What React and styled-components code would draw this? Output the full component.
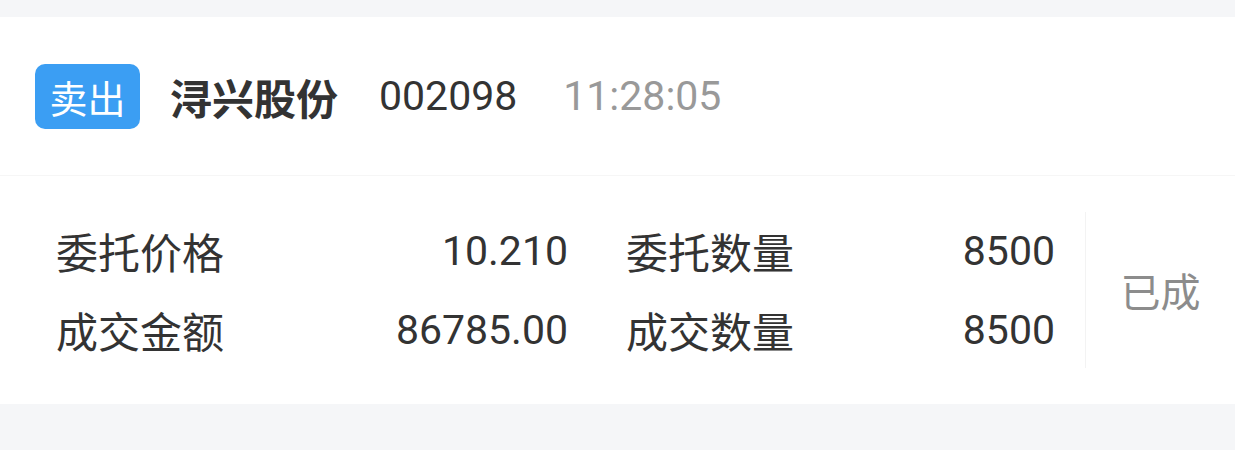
import React from "react";
import styled, { createGlobalStyle } from "styled-components";

const GlobalStyle = createGlobalStyle`
  html, body {
    margin: 0;
    padding: 0;
    background: #f5f6f8;
  }
  body {
    font-family: Roboto, "Noto Sans CJK SC", sans-serif;
    color: #333;
  }
`;

const Page = styled.div`
  width: 1235px;
  height: 450px;
  padding-top: 17px;
  box-sizing: border-box;
  background: #f5f6f8;
`;

const Card = styled.div`
  background: #fff;
`;

const Header = styled.div`
  height: 158px;
  display: flex;
  align-items: center;
  padding-left: 35px;
  border-bottom: 1px solid #f6f6f6;
`;

const Badge = styled.div`
  width: 105px;
  height: 65px;
  border-radius: 10px;
  background: #3b9ef3;
  color: #fff;
  font-family: "Noto Sans CJK SC", sans-serif;
  font-size: 38px;
  display: flex;
  align-items: center;
  justify-content: center;
  margin-right: 30px;
`;

const Name = styled.span`
  font-family: "Noto Sans CJK SC", sans-serif;
  font-weight: 700;
  font-size: 42px;
  color: #333;
  margin-right: 41px;
`;

const Code = styled.span`
  font-family: Roboto, sans-serif;
  font-size: 41px;
  color: #333;
  margin-right: 46px;
`;

const Time = styled.span`
  font-family: Roboto, sans-serif;
  font-size: 41px;
  color: #999;
`;

const Body = styled.div`
  height: 228px;
  display: flex;
  align-items: center;
`;

const Fields = styled.div`
  display: grid;
  grid-template-columns: 512px 429px;
  column-gap: 58px;
  padding-left: 56px;
  margin-right: 30px;
`;

const Field = styled.div`
  height: 79px;
  display: flex;
  align-items: center;
  justify-content: space-between;
`;

const Label = styled.span`
  font-family: "Noto Sans CJK SC", sans-serif;
  font-size: 42px;
  color: #333;
`;

const Value = styled.span`
  font-family: Roboto, sans-serif;
  font-size: 41px;
  color: #333;
`;

const Divider = styled.div`
  width: 1px;
  height: 156px;
  background: #f3f3f3;
`;

const Status = styled.div`
  flex: 1;
  text-align: center;
  font-family: "Noto Sans CJK SC", sans-serif;
  font-size: 40px;
  color: #8c8c8c;
`;

const fields = [
  ["委托价格", "10.210"],
  ["委托数量", "8500"],
  ["成交金额", "86785.00"],
  ["成交数量", "8500"],
];

const App = () => (
  <Page>
    <GlobalStyle />
    <Card>
      <Header>
        <Badge>卖出</Badge>
        <Name>浔兴股份</Name>
        <Code>002098</Code>
        <Time>11:28:05</Time>
      </Header>
      <Body>
        <Fields>
          {fields.map(([label, value]) => (
            <Field key={label}>
              <Label>{label}</Label>
              <Value>{value}</Value>
            </Field>
          ))}
        </Fields>
        <Divider />
        <Status>已成</Status>
      </Body>
    </Card>
  </Page>
);

export default App;
